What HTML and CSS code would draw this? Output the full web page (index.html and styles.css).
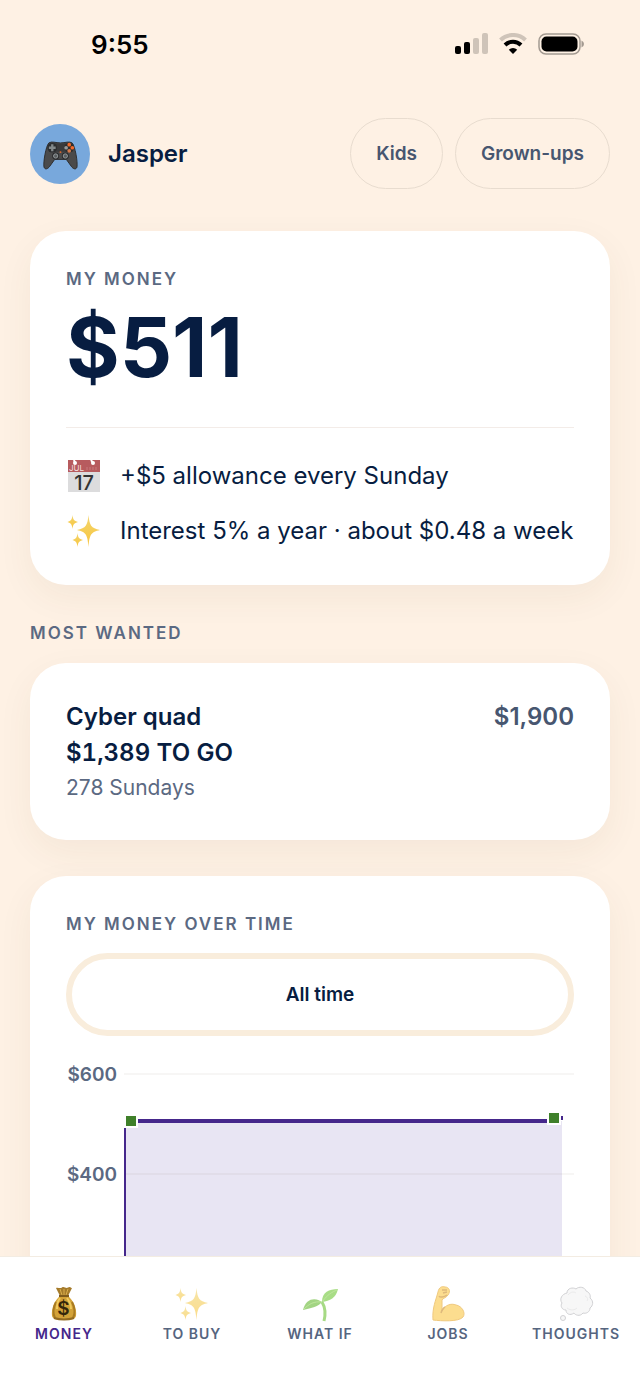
FILE: index.html
```html
<!DOCTYPE html>
<html lang="en">
<head>
    <meta charset="UTF-8">
    <meta name="viewport" content="width=device-width, initial-scale=1.0">
    <title>My Money</title>
    <link rel="stylesheet" href="styles.css">
</head>
<body>
    <!-- shared shapes -->
    <svg class="defs" width="0" height="0" aria-hidden="true">
        <defs>
            <linearGradient id="gold" x1="0" y1="0" x2="0" y2="1">
                <stop offset="0" stop-color="#f3d56e"/>
                <stop offset="1" stop-color="#f8c53c"/>
            </linearGradient>
            <symbol id="sparkles" viewBox="0 0 36 36">
                <path fill="url(#gold)" d="M22.500 2C23.500 12.500 25 15 34 17C25 19 23.500 21.500 22.500 34C21.500 21.500 20 19 11 17C20 15 21.500 12.500 22.500 2Z"/>
                <path fill="url(#gold)" d="M6.500 2C7 6.500 8 8 12 9C8 10 7 11.500 6.500 16C6 11.500 5 10 1.500 9C5 8 6 6.500 6.500 2Z"/>
                <path fill="url(#gold)" d="M11.500 20C12 24.500 13 26 17 27C13 28 12 29.500 11.500 34C11 29.500 10 28 6.500 27C10 26 11 24.500 11.500 20Z"/>
            </symbol>
        </defs>
    </svg>

    <div class="screen">
        <div class="status-bar">
            <span class="time">9:55</span>
            <div class="status-icons">
                <svg width="33" height="22" viewBox="0 0 33 22">
                    <rect x="0" y="13" width="6" height="8" rx="2"/>
                    <rect x="9" y="9" width="6" height="12" rx="2"/>
                    <rect x="18" y="5" width="6" height="16" rx="2" fill="#cfc4b9"/>
                    <rect x="27" y="0" width="6" height="21" rx="2" fill="#cfc4b9"/>
                </svg>
                <svg width="28" height="22" viewBox="0 0 28 22" fill="none">
                    <path d="M1.500 7A18 18 0 0 1 26.500 7" stroke="#cfc4b9" stroke-width="4"/>
                    <path d="M6 12A11.500 11.500 0 0 1 22 12" stroke="#000" stroke-width="4"/>
                    <path d="M14 21L9.800 16.800A6 6 0 0 1 18.200 16.800Z" fill="#000"/>
                </svg>
                <svg width="46" height="22" viewBox="0 0 46 22">
                    <rect x="1" y="1" width="41" height="20" rx="7" fill="none" stroke="#a39a91" stroke-width="1.500"/>
                    <rect x="3.500" y="3.500" width="36" height="15" rx="5"/>
                    <path d="M43.500 7.500Q46 8.500 46 11T43.500 14.500Z" fill="#a39a91"/>
                </svg>
            </div>
        </div>

        <header class="header">
            <div class="avatar">
                <svg width="35" height="31" viewBox="0 0 36 32">
                    <path d="M6 3C9 1 13 3 18 3S27 1 30 3C33 6 36 23 35 28C34 31 31 30 29 27L24 20H12L7 27C5 30 2 31 1 28C0 23 3 6 6 3Z" fill="#4a4a4b" stroke="#2d2d2f"/>
                    <path d="M7 3.500C10 2 13 4 18 4S26 2 29 3.500L31 9L24 12H12L5 9Z" fill="#3a3a3c"/>
                    <circle cx="9.500" cy="8" r="5" fill="#2c2e30"/>
                    <path d="M9.500 4.500V11.500M6 8H13" stroke="#83898b" stroke-width="2.400"/>
                    <circle cx="27" cy="8" r="5" fill="#2c2e30"/>
                    <circle cx="27" cy="4.800" r="1.900" fill="#f2692b"/>
                    <circle cx="30.200" cy="8" r="1.900" fill="#f2692b"/>
                    <circle cx="23.800" cy="8" r="1.900" fill="#9b9b9b"/>
                    <circle cx="27" cy="11.200" r="1.900" fill="#d8794a"/>
                    <circle cx="13" cy="16.500" r="3.600" fill="#29292b"/>
                    <circle cx="13" cy="16.500" r="2.200" fill="#5b5f61" stroke="#949a9c"/>
                    <circle cx="23" cy="16.500" r="3.600" fill="#29292b"/>
                    <circle cx="23" cy="16.500" r="2.200" fill="#5b5f61" stroke="#949a9c"/>
                    <circle cx="18" cy="12.500" r="1" fill="#e0672d"/>
                </svg>
            </div>
            <h1 class="name">Jasper</h1>
            <div class="switcher">
                <button type="button" class="pill">Kids</button>
                <button type="button" class="pill">Grown-ups</button>
            </div>
        </header>

        <main class="content">
            <section class="card">
                <h2 class="label">MY MONEY</h2>
                <p class="balance">$511</p>
                <ul class="facts">
                    <li>
                        <svg width="36" height="36" viewBox="0 0 36 36">
                            <rect x="2" y="2" width="32" height="32" fill="#dcdcdd"/>
                            <rect x="2" y="2" width="32" height="12" fill="#b75b5e"/>
                            <circle cx="9" cy="5" r="2" fill="#fff"/>
                            <circle cx="27" cy="5" r="2" fill="#fff"/>
                            <path d="M9 5L8 2M27 5L25 2" stroke="#fff" stroke-width="2"/>
                            <text x="3" y="13" class="cal-month">JUL</text>
                            <path d="M20 10.500H32" stroke="#c06a6d" stroke-width="3" stroke-dasharray="2 1"/>
                            <text x="18" y="32" class="cal-day">17</text>
                        </svg>
                        <span>+$5 allowance every Sunday</span>
                    </li>
                    <li>
                        <svg width="36" height="36"><use href="#sparkles"/></svg>
                        <span>Interest 5% a year · about $0.48 a week</span>
                    </li>
                </ul>
            </section>

            <h2 class="label section-label">MOST WANTED</h2>
            <section class="card goal">
                <div>
                    <h3 class="goal-line">Cyber quad</h3>
                    <p class="goal-line goal-left">$1,389 TO GO</p>
                    <p class="goal-wait">278 Sundays</p>
                </div>
                <span class="goal-line goal-price">$1,900</span>
            </section>

            <section class="card">
                <h2 class="label">MY MONEY OVER TIME</h2>
                <button type="button" class="range">All time</button>
                <svg class="chart" viewBox="0 0 508 340" role="img" aria-label="My money over time">
                    <path class="chart-area" d="M58 67H496V320H58Z"/>
                    <path class="chart-grid" d="M58 20H508M58 120H508M58 220H508M58 320H508"/>
                    <text x="51" y="27">$600</text>
                    <text x="51" y="127">$400</text>
                    <path class="chart-edge" d="M59 320V67"/>
                    <path class="chart-line" d="M59 67H488M488 64H497"/>
                    <rect class="chart-point" x="59" y="61" width="12" height="12"/>
                    <rect class="chart-point" x="482" y="58" width="12" height="12"/>
                </svg>
            </section>
        </main>

        <nav class="tabs">
            <a href="#money" class="tab active">
                <svg width="36" height="36" viewBox="0 0 36 36">
                    <path d="M10 2C12 1 14 3 16 1.500S20 3 22 1.500S25 2 26 2L22 10H14Z" fill="#a57b2b"/>
                    <path d="M14 3L16 9M18 3V9M22 3L20 9" stroke="#d9ae4c" fill="none"/>
                    <path d="M14 10H22C27 14 31 22 30 30C29 34 24 34 18 34S7 34 6 30C5 22 9 14 14 10Z" fill="#d3a238"/>
                    <path d="M10 16C7 22 7 28 9 32M26 16C29 22 29 28 27 32" stroke="#a87a22" stroke-width="2" fill="none"/>
                    <path d="M14 12C11 16 11 20 11 23M21 12C24 16 25 19 25 23" stroke="#f0cb5f" stroke-width="2" fill="none"/>
                    <path d="M13 10H23" stroke="#7f5b1c" stroke-width="2"/>
                    <path d="M8 32Q18 35 28 32" stroke="#926a20" stroke-width="2" fill="none"/>
                    <text x="18" y="29" class="bag-sign">$</text>
                </svg>
                MONEY
            </a>
            <a href="#to-buy" class="tab">
                <svg width="36" height="36"><use href="#sparkles"/></svg>
                TO BUY
            </a>
            <a href="#what-if" class="tab">
                <svg width="36" height="36" viewBox="0 0 36 36">
                    <path d="M22 35C24 27 23 21 20 16" stroke="#6cc234" stroke-width="3" fill="none"/>
                    <path d="M21 17C15 11 4 11 1 24C10 22 16 21 21 15Z" fill="#66b932"/>
                    <path d="M20 16C20 6 27 3 36 3C34 12 28 15 20 16Z" fill="#70c837"/>
                    <path d="M2 23C7 18 12 15 20 16M21 15C25 9 30 6 35 4" stroke="#92d45d" fill="none"/>
                </svg>
                WHAT IF
            </a>
            <a href="#jobs" class="tab">
                <svg width="36" height="36" viewBox="0 0 36 36">
                    <path d="M3 34C2 22 6 14 8 6C9 1 12 0 15 1C19 1 21 5 18 9C16 12 13 12 12 14L12 25C15 19 21 17 26 19C32 20 36 27 33 31C29 36 11 35 3 34Z" fill="#fbc845" stroke="#e6a62a"/>
                    <path d="M9 10C10 12 14 11 17 9M12 4L17 4M13 7L17 6M11 27C12 24 13 22 15 21" stroke="#c98b26" stroke-width="1.500" fill="none"/>
                </svg>
                JOBS
            </a>
            <a href="#thoughts" class="tab">
                <svg width="36" height="36" viewBox="0 0 36 36">
                    <g fill="#f2f2f3" stroke="#b4b4b8">
                        <path d="M9 7C9 2 15 1 18 3C21 0 27 1 28 5C31 6 33 9 32 12C36 15 35 20 32 22C32 26 28 28 25 27C22 31 17 29 16 27C12 30 8 28 8 24C4 24 2 20 4 17C1 13 4 8 9 7Z"/>
                        <circle cx="5" cy="32" r="2.500"/>
                    </g>
                    <path d="M10 9C13 5 17 6 18 7M27 10C30 11 30 14 29 15M9 22C13 25 17 24 19 22" stroke="#ddd" fill="none"/>
                </svg>
                THOUGHTS
            </a>
        </nav>
    </div>
</body>
</html>
```

FILE: styles.css
```css
* {
    margin: 0;
    padding: 0;
    box-sizing: border-box;
}
body {
    font-family: Inter, "Liberation Sans", sans-serif;
    background: #fef1e4;
    color: #071d41;
}
.defs {
    position: absolute;
}
.screen {
    height: 100vh;
    display: flex;
    flex-direction: column;
}
.status-bar {
    flex: none;
    display: flex;
    justify-content: space-between;
    align-items: center;
    height: 88px;
    padding: 0 56px 0 91px;
    color: #000;
}
.time {
    font-size: 26px;
    font-weight: 600;
}
.status-icons {
    display: flex;
    gap: 11px;
}
.header {
    flex: none;
    display: flex;
    align-items: center;
    gap: 18px;
    padding: 30px 30px 0;
}
.avatar {
    width: 60px;
    height: 60px;
    padding-top: 4px;
    border-radius: 50%;
    background: #78a8dc;
    display: flex;
    justify-content: center;
    align-items: center;
}
.name {
    font-size: 24px;
    font-weight: 600;
}
.switcher {
    display: flex;
    gap: 12px;
    margin-left: auto;
}
.pill {
    height: 71px;
    padding: 0 25px;
    border: 1px solid #e8dccf;
    border-radius: 36px;
    background: none;
    color: #475670;
    font: 600 19px Inter, sans-serif;
    cursor: pointer;
}
.content {
    flex: 1;
    min-height: 0;
    overflow-y: auto;
    scrollbar-width: none;
    padding: 42px 30px 36px;
}
.card {
    background: #fff;
    border-radius: 36px;
    padding: 36px;
    box-shadow: 0 12px 36px rgba(90, 70, 30, 0.06);
    margin-bottom: 36px;
}
.label {
    font-size: 17px;
    font-weight: 600;
    line-height: 24px;
    letter-spacing: 2px;
    color: #5b6982;
}
.section-label {
    margin-bottom: 18px;
}
.balance {
    font-size: 82px;
    font-weight: 700;
    line-height: 88px;
    padding: 13px 0 35px;
    border-bottom: 1px solid #f3ece8;
}
.facts {
    list-style: none;
    display: grid;
    gap: 19px;
    padding-top: 30px;
}
.facts li {
    display: flex;
    align-items: center;
    gap: 18px;
    font-size: 24px;
    line-height: 36px;
}
.facts svg {
    flex: none;
}
.cal-month {
    font-size: 8px;
    fill: #f3dfdf;
}
.cal-day {
    font-size: 20px;
    font-weight: 500;
    text-anchor: middle;
    fill: #333;
}
.goal {
    display: flex;
    justify-content: space-between;
}
.goal-line {
    font-size: 24px;
    font-weight: 600;
    line-height: 36px;
}
.goal-left {
    font-variant-numeric: tabular-nums;
}
.goal-price {
    color: #475670;
}
.goal-wait {
    font-size: 21px;
    line-height: 33px;
    color: #5b6982;
}
.range {
    display: block;
    width: 100%;
    height: 83px;
    margin: 17px 0 18px;
    border: 6px solid #f9eddc;
    border-radius: 42px;
    background: #fff;
    color: #071d41;
    font: 600 19px Inter, sans-serif;
    cursor: pointer;
}
.chart {
    display: block;
    width: 100%;
}
.chart text {
    font-size: 19px;
    font-weight: 600;
    text-anchor: end;
    fill: #5b6982;
}
.chart-area {
    fill: #e8e5f3;
}
.chart-grid {
    stroke: rgba(110, 90, 60, 0.1);
}
.chart-edge {
    stroke: #45278b;
    stroke-width: 2;
}
.chart-line {
    stroke: #45278b;
    stroke-width: 4;
}
.chart-point {
    fill: #3f802a;
    stroke: #fff;
    stroke-width: 2;
}
.tabs {
    flex: none;
    display: grid;
    grid-template-columns: repeat(5, 1fr);
    padding: 29px 0 42px;
    background: #fff;
    border-top: 1px solid #f3ece2;
}
.tab {
    display: flex;
    flex-direction: column;
    align-items: center;
    gap: 1px;
    color: #56657f;
    font-size: 14px;
    font-weight: 600;
    line-height: 22px;
    letter-spacing: 1px;
    text-decoration: none;
}
.tab svg {
    opacity: 0.6;
}
.tab.active {
    color: #45278b;
}
.tab.active svg {
    opacity: 1;
}
.bag-sign {
    font-size: 19px;
    font-weight: 600;
    text-anchor: middle;
    fill: #33260b;
}
```
